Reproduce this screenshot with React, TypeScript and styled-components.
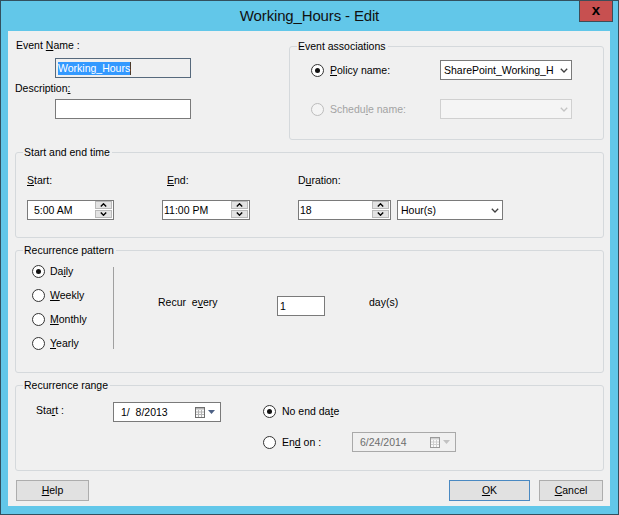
import React from 'react';
import styled, { createGlobalStyle, css } from 'styled-components';

const GlobalStyle = createGlobalStyle`
  html, body { margin: 0; padding: 0; background: #ffffff; }
  body { font-family: "Liberation Sans", Arial, sans-serif; }
  *, *::before, *::after { box-sizing: border-box; }
`;

const Window = styled.div`
  width: 619px;
  height: 515px;
  border: 1px solid #32505f;
  background: #62c7e9;
  display: flex;
  flex-direction: column;
  font-family: "Liberation Sans", Arial, sans-serif;
  font-size: 10.5px;
  color: #000;
`;

const TitleBar = styled.div`
  position: relative;
  height: 30px;
  flex: none;
  display: flex;
  align-items: center;
  justify-content: center;
`;

const Title = styled.div`
  font-size: 15px;
  letter-spacing: -0.15px;
  line-height: 30px;
  color: #111;
`;

const CloseButton = styled.div`
  position: absolute;
  top: -1px;
  right: 5px;
  width: 34px;
  height: 22px;
  background: #c75050;
  border: 1px solid #3d4d58;
  display: flex;
  align-items: center;
  justify-content: center;
  font-weight: bold;
  font-size: 15px;
  line-height: 15px;
  padding-bottom: 3px;
  color: #000;
`;

const Client = styled.div`
  flex: 1;
  margin: 0 8px 8px 7px;
  background: #f0f0f0;
  padding: 8px 6px 4px 7px;
  display: flex;
  flex-direction: column;
`;

const TopSection = styled.div`
  display: flex;
  align-items: flex-start;
`;

const LeftColumn = styled.div`
  flex: 1;
  display: flex;
  flex-direction: column;
`;

const Label = styled.div<{ $indent?: number; $top?: number }>`
  line-height: 13px;
  white-space: pre;
  margin-left: ${p => p.$indent ?? 0}px;
  margin-top: ${p => p.$top ?? 0}px;
`;

const Key = styled.span`
  text-decoration: underline;
  text-underline-offset: 1px;
`;

const TextBox = styled.div<{ $w: number; $readonly?: boolean; $top?: number; $left?: number; $pad?: number }>`
  width: ${p => p.$w}px;
  height: 20px;
  margin-top: ${p => p.$top ?? 0}px;
  margin-left: ${p => p.$left ?? 0}px;
  border: 1px solid ${p => (p.$readonly ? '#56697c' : '#7a7a7a')};
  background: ${p => (p.$readonly ? '#f0f0f0' : '#ffffff')};
  padding-left: ${p => p.$pad ?? 2}px;
  display: flex;
  align-items: center;
  line-height: 13px;
`;

const Selection = styled.span`
  background: #3399ff;
  color: #fff;
  line-height: 13px;
  border-right: 1px solid #4a3a2a;
`;

const Group = styled.div<{ $w?: number; $top?: number }>`
  position: relative;
  border: 1px solid #d5d9dc;
  border-radius: 3px;
  margin-top: ${p => p.$top ?? 12}px;
  ${p => p.$w && css`width: ${p.$w}px; flex: none;`}
`;

const Legend = styled.span`
  position: absolute;
  top: -7px;
  left: 7px;
  padding: 0 2px 0 1px;
  line-height: 13px;
  background: #f0f0f0;
  white-space: nowrap;
`;

const AssocGrid = styled.div`
  display: grid;
  grid-template-columns: 129px 132px;
  row-gap: 19px;
  align-items: center;
  padding: 13px 0 20px 21px;
`;

const RadioLabel = styled.div<{ $disabled?: boolean; $gap?: number; $w?: number }>`
  display: flex;
  align-items: center;
  gap: ${p => p.$gap ?? 6}px;
  line-height: 13px;
  white-space: pre;
  color: ${p => (p.$disabled ? '#a3a3a3' : '#000')};
  ${p => p.$w && css`width: ${p.$w}px; flex: none;`}
`;

const RadioCircle = styled.span<{ $checked?: boolean; $disabled?: boolean }>`
  position: relative;
  flex: none;
  width: 13px;
  height: 13px;
  border-radius: 50%;
  border: 1px solid ${p => (p.$disabled ? '#bcbcbc' : '#333333')};
  background: ${p => (p.$disabled ? '#f4f4f4' : '#ffffff')};
  ${p =>
    p.$checked &&
    css`
      &::after {
        content: '';
        position: absolute;
        left: 3px;
        top: 3px;
        width: 5px;
        height: 5px;
        border-radius: 50%;
        background: #111;
      }
    `}
`;

const Combo = styled.div<{ $w: number; $disabled?: boolean }>`
  width: ${p => p.$w}px;
  height: 20px;
  border: 1px solid ${p => (p.$disabled ? '#d0d0d0' : '#7a7a7a')};
  background: ${p => (p.$disabled ? '#f5f5f5' : '#ffffff')};
  display: flex;
  align-items: center;
  padding-left: 3px;
`;

const ComboText = styled.span`
  flex: 1;
  overflow: hidden;
  white-space: nowrap;
  line-height: 13px;
`;

const ComboArrow = styled.span`
  width: 15px;
  flex: none;
  display: flex;
  align-items: center;
  justify-content: center;
`;

const TimeRow = styled.div`
  display: flex;
  gap: 48px;
  padding: 21px 0 17px 11px;
`;

const Field = styled.div`
  display: flex;
  flex-direction: column;
  gap: 13px;
`;

const InlineControls = styled.div`
  display: flex;
  gap: 6px;
`;

const SpinBox = styled.div<{ $w: number }>`
  width: ${p => p.$w}px;
  height: 20px;
  border: 1px solid #7a7a7a;
  background: #fff;
  display: flex;
  padding: 0 1px 1px 0;
`;

const SpinText = styled.span<{ $pad: number }>`
  flex: 1;
  padding-left: ${p => p.$pad}px;
  line-height: 18px;
  white-space: pre;
`;

const SpinButtons = styled.div`
  width: 17px;
  display: flex;
  flex-direction: column;
  gap: 1px;
`;

const SpinBtn = styled.div`
  flex: 1;
  background: #e3e3e3;
  border: 1px solid #b9b9b9;
  display: flex;
  align-items: center;
  justify-content: center;
`;

const PatternBody = styled.div`
  display: flex;
  align-items: flex-start;
  padding: 8px 0 17px 16px;
`;

const RadioList = styled.div`
  width: 81px;
  display: flex;
  flex-direction: column;
`;

const RadioRow = styled.div`
  height: 24px;
  display: flex;
  align-items: center;
`;

const VSep = styled.div`
  width: 1px;
  height: 82px;
  margin-top: 8px;
  background: #a0a0a0;
`;

const RecurRow = styled.div`
  display: flex;
  align-items: flex-start;
  margin: 37px 0 0 44px;
`;

const RecurLabel = styled.div<{ $w?: number; $left?: number }>`
  line-height: 13px;
  white-space: pre;
  margin-left: ${p => p.$left ?? 0}px;
  ${p => p.$w && css`width: ${p.$w}px; flex: none;`}
`;

const RangeBody = styled.div`
  display: flex;
  align-items: flex-start;
  padding: 16px 0 18px 20px;
`;

const StartBlock = styled.div`
  display: flex;
  align-items: flex-start;
`;

const RangeLabel = styled.div`
  width: 77px;
  line-height: 13px;
  margin-top: 2px;
  white-space: pre;
`;

const EndColumn = styled.div`
  display: flex;
  flex-direction: column;
  gap: 11px;
  margin: -1px 0 0 42px;
`;

const EndRow = styled.div`
  height: 20px;
  display: flex;
  align-items: center;
`;

const DatePicker = styled.div<{ $w: number; $disabled?: boolean }>`
  width: ${p => p.$w}px;
  height: 20px;
  border: 1px solid ${p => (p.$disabled ? '#a9a9a9' : '#7a7a7a')};
  background: ${p => (p.$disabled ? '#f0f0f0' : '#ffffff')};
  color: ${p => (p.$disabled ? '#6d6d6d' : '#000')};
  display: flex;
  align-items: center;
  padding: 0 5px 0 7px;
`;

const DateText = styled.span`
  flex: 1;
  line-height: 13px;
  white-space: pre;
`;

const DateIcons = styled.span`
  display: flex;
  align-items: center;
  gap: 3px;
`;

const ButtonRow = styled.div`
  display: flex;
  margin-top: 9px;
  padding: 0 1px;
`;

const Spacer = styled.div`
  flex: 1;
`;

const Button = styled.div<{ $w: number; $default?: boolean; $gap?: number }>`
  width: ${p => p.$w}px;
  height: 21px;
  margin-left: ${p => p.$gap ?? 0}px;
  border: 1px solid ${p => (p.$default ? '#4a89c2' : '#adadad')};
  background: #e1e1e1;
  display: flex;
  align-items: center;
  justify-content: center;
  line-height: 13px;
`;

const Chevron = ({ color = '#404040' }: { color?: string }) => (
  <svg width="8" height="5" viewBox="0 0 8 5">
    <polyline points="0.8,0.8 4,4 7.2,0.8" fill="none" stroke={color} strokeWidth="1.3" />
  </svg>
);

const SpinArrow = ({ up }: { up?: boolean }) => (
  <svg width="7" height="4" viewBox="0 0 7 4">
    <polyline
      points={up ? '0.8,3.5 3.5,0.8 6.2,3.5' : '0.8,0.5 3.5,3.2 6.2,0.5'}
      fill="none"
      stroke="#000"
      strokeWidth="1.4"
    />
  </svg>
);

const CalendarIcon = ({ disabled }: { disabled?: boolean }) => {
  const edge = disabled ? '#9a9a9a' : '#6f6f6f';
  const grid = disabled ? '#cfcfcf' : '#b4b4b4';
  return (
    <svg width="10" height="11" viewBox="0 0 10 11">
      <rect x="0.5" y="0.5" width="9" height="10" fill="#fafafa" stroke={edge} />
      <rect x="1" y="1" width="8" height="1.5" fill={grid} />
      <line x1="3.5" y1="3" x2="3.5" y2="10" stroke={grid} strokeWidth="1" />
      <line x1="6.5" y1="3" x2="6.5" y2="10" stroke={grid} strokeWidth="1" />
      <line x1="1" y1="5" x2="9" y2="5" stroke={grid} strokeWidth="1" />
      <line x1="1" y1="7.5" x2="9" y2="7.5" stroke={grid} strokeWidth="1" />
    </svg>
  );
};

const DropTriangle = ({ disabled }: { disabled?: boolean }) => (
  <svg width="7" height="4" viewBox="0 0 7 4">
    <polygon points="0,0 7,0 3.5,4" fill={disabled ? '#c2c2c2' : '#4d6185'} />
  </svg>
);

const Spin = ({ w, pad, value }: { w: number; pad: number; value: string }) => (
  <SpinBox $w={w}>
    <SpinText $pad={pad}>{value}</SpinText>
    <SpinButtons>
      <SpinBtn>
        <SpinArrow up />
      </SpinBtn>
      <SpinBtn>
        <SpinArrow />
      </SpinBtn>
    </SpinButtons>
  </SpinBox>
);

export default function App() {
  return (
    <>
      <GlobalStyle />
      <Window>
        <TitleBar>
          <Title>Working_Hours - Edit</Title>
          <CloseButton>x</CloseButton>
        </TitleBar>
        <Client>
          <TopSection>
            <LeftColumn>
              <Label $indent={1}>
                Event <Key>N</Key>ame :
              </Label>
              <TextBox $w={136} $readonly $top={6} $left={40}>
                <Selection>Working_Hours</Selection>
              </TextBox>
              <Label $top={4}>
                Description<Key>:</Key>
              </Label>
              <TextBox $w={136} $top={4} $left={40} />
            </LeftColumn>
            <Group $w={315} $top={7}>
              <Legend>Event associations</Legend>
              <AssocGrid>
                <RadioLabel>
                  <RadioCircle $checked />
                  <span>
                    <Key>P</Key>olicy name:
                  </span>
                </RadioLabel>
                <Combo $w={132}>
                  <ComboText>SharePoint_Working_H</ComboText>
                  <ComboArrow>
                    <Chevron />
                  </ComboArrow>
                </Combo>
                <RadioLabel $disabled>
                  <RadioCircle $disabled />
                  <span>
                    Schedu<Key>l</Key>e name:
                  </span>
                </RadioLabel>
                <Combo $w={132} $disabled>
                  <ComboText />
                  <ComboArrow>
                    <Chevron color="#c4c4c4" />
                  </ComboArrow>
                </Combo>
              </AssocGrid>
            </Group>
          </TopSection>

          <Group>
            <Legend>Start and end time</Legend>
            <TimeRow>
              <Field>
                <Label>
                  <Key>S</Key>tart:
                </Label>
                <Spin w={87} pad={3} value={'\u00a05:00 AM'} />
              </Field>
              <Field>
                <Label $indent={5}>
                  <Key>E</Key>nd:
                </Label>
                <Spin w={88} pad={1} value="11:00 PM" />
              </Field>
              <Field>
                <Label>
                  D<Key>u</Key>ration:
                </Label>
                <InlineControls>
                  <Spin w={93} pad={1} value="18" />
                  <Combo $w={106}>
                    <ComboText>Hour(s)</ComboText>
                    <ComboArrow>
                      <Chevron />
                    </ComboArrow>
                  </Combo>
                </InlineControls>
              </Field>
            </TimeRow>
          </Group>

          <Group>
            <Legend>Recurrence pattern</Legend>
            <PatternBody>
              <RadioList>
                <RadioRow>
                  <RadioLabel $gap={5}>
                    <RadioCircle $checked />
                    <span>
                      Da<Key>i</Key>ly
                    </span>
                  </RadioLabel>
                </RadioRow>
                <RadioRow>
                  <RadioLabel $gap={5}>
                    <RadioCircle />
                    <span>
                      <Key>W</Key>eekly
                    </span>
                  </RadioLabel>
                </RadioRow>
                <RadioRow>
                  <RadioLabel $gap={5}>
                    <RadioCircle />
                    <span>
                      <Key>M</Key>onthly
                    </span>
                  </RadioLabel>
                </RadioRow>
                <RadioRow>
                  <RadioLabel $gap={5}>
                    <RadioCircle />
                    <span>
                      <Key>Y</Key>early
                    </span>
                  </RadioLabel>
                </RadioRow>
              </RadioList>
              <VSep />
              <RecurRow>
                <RecurLabel $w={119}>
                  Recur  e<Key>v</Key>ery
                </RecurLabel>
                <TextBox $w={48} $pad={2}>1</TextBox>
                <RecurLabel $left={44}>day(s)</RecurLabel>
              </RecurRow>
            </PatternBody>
          </Group>

          <Group>
            <Legend>Recurrence range</Legend>
            <RangeBody>
              <StartBlock>
                <RangeLabel>
                  Sta<Key>r</Key>t :
                </RangeLabel>
                <DatePicker $w={108}>
                  <DateText>{'1/ \u00a08/2013'}</DateText>
                  <DateIcons>
                    <CalendarIcon />
                    <DropTriangle />
                  </DateIcons>
                </DatePicker>
              </StartBlock>
              <EndColumn>
                <EndRow>
                  <RadioLabel>
                    <RadioCircle $checked />
                    <span>
                      No end da<Key>t</Key>e
                    </span>
                  </RadioLabel>
                </EndRow>
                <EndRow>
                  <RadioLabel $w={89}>
                    <RadioCircle />
                    <span>
                      En<Key>d</Key> on :
                    </span>
                  </RadioLabel>
                  <DatePicker $w={104} $disabled>
                    <DateText>6/24/2014</DateText>
                    <DateIcons>
                      <CalendarIcon disabled />
                      <DropTriangle disabled />
                    </DateIcons>
                  </DatePicker>
                </EndRow>
              </EndColumn>
            </RangeBody>
          </Group>

          <ButtonRow>
            <Button $w={73}>
              <span>
                <Key>H</Key>elp
              </span>
            </Button>
            <Spacer />
            <Button $w={81} $default>
              <span>
                <Key>O</Key>K
              </span>
            </Button>
            <Button $w={64} $gap={9}>
              <span>
                <Key>C</Key>ancel
              </span>
            </Button>
          </ButtonRow>
        </Client>
      </Window>
    </>
  );
}
